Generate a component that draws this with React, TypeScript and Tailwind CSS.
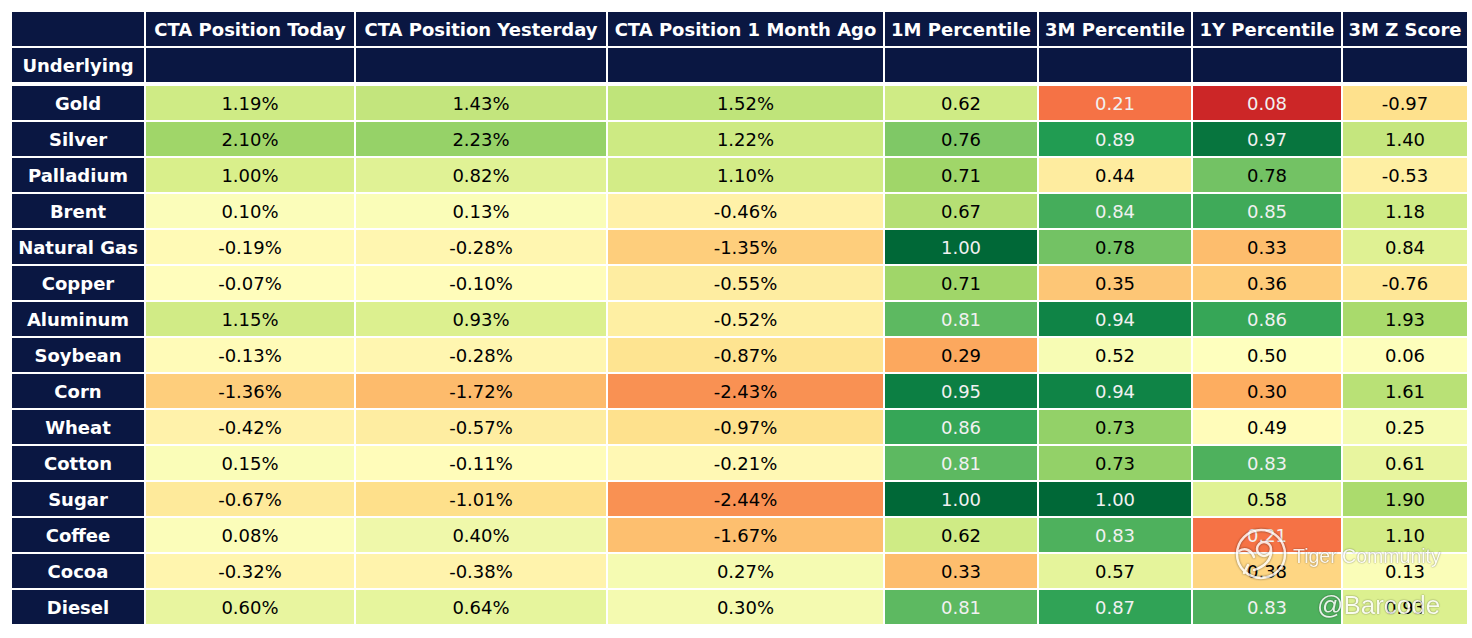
type Row = { name: string; cta: [number, number, number]; pct: [number, number, number]; z: number };

const rows: Row[] = [
  { name: "Gold", cta: [1.19, 1.43, 1.52], pct: [0.62, 0.21, 0.08], z: -0.97 },
  { name: "Silver", cta: [2.1, 2.23, 1.22], pct: [0.76, 0.89, 0.97], z: 1.4 },
  { name: "Palladium", cta: [1.0, 0.82, 1.1], pct: [0.71, 0.44, 0.78], z: -0.53 },
  { name: "Brent", cta: [0.1, 0.13, -0.46], pct: [0.67, 0.84, 0.85], z: 1.18 },
  { name: "Natural Gas", cta: [-0.19, -0.28, -1.35], pct: [1.0, 0.78, 0.33], z: 0.84 },
  { name: "Copper", cta: [-0.07, -0.1, -0.55], pct: [0.71, 0.35, 0.36], z: -0.76 },
  { name: "Aluminum", cta: [1.15, 0.93, -0.52], pct: [0.81, 0.94, 0.86], z: 1.93 },
  { name: "Soybean", cta: [-0.13, -0.28, -0.87], pct: [0.29, 0.52, 0.5], z: 0.06 },
  { name: "Corn", cta: [-1.36, -1.72, -2.43], pct: [0.95, 0.94, 0.3], z: 1.61 },
  { name: "Wheat", cta: [-0.42, -0.57, -0.97], pct: [0.86, 0.73, 0.49], z: 0.25 },
  { name: "Cotton", cta: [0.15, -0.11, -0.21], pct: [0.81, 0.73, 0.83], z: 0.61 },
  { name: "Sugar", cta: [-0.67, -1.01, -2.44], pct: [1.0, 1.0, 0.58], z: 1.9 },
  { name: "Coffee", cta: [0.08, 0.4, -1.67], pct: [0.62, 0.83, 0.21], z: 1.1 },
  { name: "Cocoa", cta: [-0.32, -0.38, 0.27], pct: [0.33, 0.57, 0.38], z: 0.13 },
  { name: "Diesel", cta: [0.6, 0.64, 0.3], pct: [0.81, 0.87, 0.83], z: 0.93 },
];

const headers = [
  "",
  "CTA Position Today",
  "CTA Position Yesterday",
  "CTA Position 1 Month Ago",
  "1M Percentile",
  "3M Percentile",
  "1Y Percentile",
  "3M Z Score",
];

// RdYlGn anchors, same as matplotlib
const anchors = [
  [0.647, 0.0, 0.149],
  [0.843, 0.188, 0.153],
  [0.957, 0.427, 0.263],
  [0.992, 0.682, 0.38],
  [0.996, 0.878, 0.545],
  [1.0, 1.0, 0.749],
  [0.851, 0.937, 0.545],
  [0.651, 0.851, 0.416],
  [0.4, 0.741, 0.388],
  [0.102, 0.596, 0.314],
  [0.0, 0.408, 0.216],
];

function rdylgn(t: number) {
  const idx = Math.min(255, Math.max(0, Math.floor(t * 256)));
  const x = (idx / 255) * 10;
  const i = Math.min(9, Math.floor(x));
  const f = x - i;
  return anchors[i].map((c, k) => c + (anchors[i + 1][k] - c) * f);
}

function cellStyle(value: number, vmin: number, vmax: number) {
  const rgb = rdylgn((value - vmin) / (vmax - vmin));
  const lin = (c: number) => (c <= 0.03928 ? c / 12.92 : Math.pow((c + 0.055) / 1.055, 2.4));
  const lum = 0.2126 * lin(rgb[0]) + 0.7152 * lin(rgb[1]) + 0.0722 * lin(rgb[2]);
  const [r, g, b] = rgb.map((c) => Math.round(c * 255));
  return { backgroundColor: `rgb(${r},${g},${b})`, color: lum < 0.408 ? "#f1f1f1" : "#000000" };
}

const grid =
  "grid grid-cols-[132px_208px_250px_275px_152px_152px_148px_124px] auto-rows-[34px] gap-[2px]";

export default function App() {
  return (
    <div className="relative h-[638px] w-[1472px] overflow-hidden bg-white pl-[12px] pt-[12px] font-['DejaVu_Sans',sans-serif] text-[18px]">
      <div className={grid}>
        {headers.map((h, i) => (
          <div key={i} className="flex items-center justify-center bg-[#0a1742] font-bold text-white">
            {h}
          </div>
        ))}
        <div className="flex items-center justify-center bg-[#0a1742] font-bold text-white">Underlying</div>
        {headers.slice(1).map((_, i) => (
          <div key={i} className="bg-[#0a1742]" />
        ))}
      </div>

      <div className={`${grid} mt-[4px]`}>
        {rows.map((row) => (
          <>
            <div key={row.name} className="flex items-center justify-center bg-[#0a1742] font-bold text-white">
              {row.name}
            </div>
            {row.cta.map((v, i) => (
              <div key={`${row.name}-c${i}`} className="flex items-center justify-center" style={cellStyle(v, -5, 5)}>
                {v.toFixed(2)}%
              </div>
            ))}
            {row.pct.map((v, i) => (
              <div key={`${row.name}-p${i}`} className="flex items-center justify-center" style={cellStyle(v, 0, 1)}>
                {v.toFixed(2)}
              </div>
            ))}
            <div key={`${row.name}-z`} className="flex items-center justify-center" style={cellStyle(row.z, -5, 5)}>
              {row.z.toFixed(2)}
            </div>
          </>
        ))}
      </div>

      {/* watermark */}
      <div className="pointer-events-none absolute left-[1234px] top-[527px] opacity-80">
        <svg width="54" height="54" viewBox="0 0 54 54" fill="none" className="[filter:drop-shadow(0_0_1px_rgba(0,0,0,0.6))]">
          <circle cx="27" cy="27" r="24" stroke="white" strokeWidth="2.5" />
          <circle cx="30" cy="22" r="7" stroke="white" strokeWidth="2.5" />
          <path d="M37 23 C38 33 30 40 20 43" stroke="white" strokeWidth="2.5" strokeLinecap="round" />
          <path d="M5 24 C12 20 18 24 20 30" stroke="white" strokeWidth="2.5" strokeLinecap="round" />
          <path d="M14 38 L10 46" stroke="white" strokeWidth="2.5" strokeLinecap="round" />
        </svg>
      </div>
      <div className="pointer-events-none absolute left-[1293px] top-[547px] font-['Liberation_Sans',sans-serif] text-[19.5px] leading-none text-white opacity-85 [text-shadow:0_0_1.5px_rgba(0,0,0,0.7)]">
        Tiger Community
      </div>
      <div className="pointer-events-none absolute left-[1317px] top-[592px] font-['Liberation_Sans',sans-serif] text-[26px] leading-none text-white opacity-85 [text-shadow:0_0_1.5px_rgba(0,0,0,0.7)]">
        @Barcode
      </div>
    </div>
  );
}
